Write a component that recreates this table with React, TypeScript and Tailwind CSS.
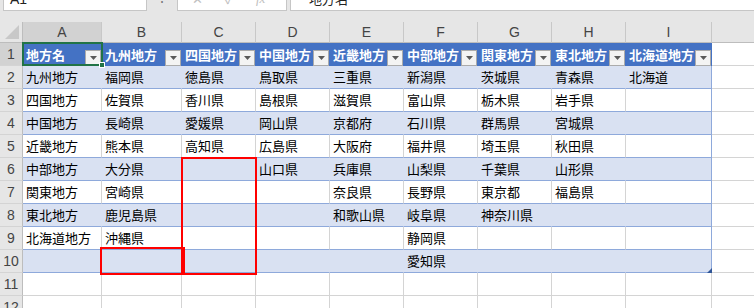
import React from 'react';

const COLS = ['A', 'B', 'C', 'D', 'E', 'F', 'G', 'H', 'I'];

const HEADERS = ['地方名', '九州地方', '四国地方', '中国地方', '近畿地方', '中部地方', '関東地方', '東北地方', '北海道地方'];

const ROWS: string[][] = [
  ['九州地方', '福岡県', '徳島県', '鳥取県', '三重県', '新潟県', '茨城県', '青森県', '北海道'],
  ['四国地方', '佐賀県', '香川県', '島根県', '滋賀県', '富山県', '栃木県', '岩手県', ''],
  ['中国地方', '長崎県', '愛媛県', '岡山県', '京都府', '石川県', '群馬県', '宮城県', ''],
  ['近畿地方', '熊本県', '高知県', '広島県', '大阪府', '福井県', '埼玉県', '秋田県', ''],
  ['中部地方', '大分県', '', '山口県', '兵庫県', '山梨県', '千葉県', '山形県', ''],
  ['関東地方', '宮崎県', '', '', '奈良県', '長野県', '東京都', '福島県', ''],
  ['東北地方', '鹿児島県', '', '', '和歌山県', '岐阜県', '神奈川県', '', ''],
  ['北海道地方', '沖縄県', '', '', '', '静岡県', '', '', ''],
  ['', '', '', '', '', '愛知県', '', '', ''],
];

const font = "font-['Noto_Sans_CJK_JP','Liberation_Sans',sans-serif]";

// テーブル見出しのフィルターボタン
function FilterButton() {
  return (
    <div className="self-end mr-[1px] w-[16px] h-[16px] shrink-0 bg-[#f3f3f3] border border-[#ababab] flex items-center justify-center">
      <svg width="7" height="4" viewBox="0 0 7 4">
        <path d="M0 0 L7 0 L3.5 4 Z" fill="#595959" />
      </svg>
    </div>
  );
}

function RowHeader({ n, active }: { n: number; active?: boolean }) {
  return (
    <div
      className={`h-[23px] border-r border-b border-r-[#bdbdbd] border-b-[#d4d4d4] flex items-center justify-center text-[14px] text-[#444] font-['Liberation_Sans',sans-serif] ${
        active ? 'bg-[#d2d2d2]' : 'bg-[#e6e6e6]'
      }`}
    >
      {n}
    </div>
  );
}

export default function App() {
  return (
    <div className={`relative w-[754px] h-[308px] overflow-hidden bg-white ${font}`}>
      {/* 数式バー（上端で切れている） */}
      <div className="h-[22px] bg-[#e6e6e6] flex items-start overflow-hidden">
        <div className="ml-[3px] -mt-[13px] w-[144px] h-[24px] bg-white border border-[#c6c6c6] pl-[6px] flex items-center text-[14px] text-[#222] font-['Liberation_Sans',sans-serif]">
          A1
        </div>
        <div className="w-[30px] -mt-[11px] text-center text-[14px] text-[#777] leading-none">⋮</div>
        <div className="-mt-[13px] w-[110px] h-[24px] bg-white border border-[#c6c6c6] flex items-center gap-[22px] pl-[14px] text-[13px] text-[#c0c0c0]">
          <span>✕</span>
          <span>✓</span>
          <span className="italic font-['Liberation_Serif',serif]">fx</span>
        </div>
        <div className="ml-[3px] -mt-[13px] flex-1 h-[24px] bg-white border border-[#c6c6c6] border-r-0 pl-[18px] flex items-center text-[13px] text-[#222]">
          地方名
        </div>
      </div>

      {/* シート */}
      <div className="grid grid-cols-[23px_79px_80px_74px_74px_74px_74px_74px_74px_86px_1fr]">
        {/* 列見出し */}
        <div className="h-[21px] bg-[#e6e6e6] border-r border-b border-[#bdbdbd] relative">
          <svg className="absolute right-[3px] bottom-[3px]" width="14" height="14" viewBox="0 0 14 14">
            <path d="M14 0 L14 14 L0 14 Z" fill="#c8c8c8" />
          </svg>
        </div>
        {COLS.map((c, i) => (
          <div
            key={c}
            className={`h-[21px] border-r border-b border-r-[#c8c8c8] border-b-[#bdbdbd] flex items-center justify-center text-[14px] text-[#444] font-['Liberation_Sans',sans-serif] ${
              i === 0 ? 'bg-[#d2d2d2]' : 'bg-[#e6e6e6]'
            }`}
          >
            {c}
          </div>
        ))}
        <div className="h-[21px] bg-[#e6e6e6] border-b border-[#bdbdbd]" />

        {/* 1行目：テーブル見出し */}
        <RowHeader n={1} active />
        {HEADERS.map((h) => (
          <div key={h} className="h-[23px] bg-[#4472c4] flex items-center pl-[3px] text-[13px] font-bold text-white">
            <span className="flex-1 whitespace-nowrap overflow-hidden">{h}</span>
            <FilterButton />
          </div>
        ))}
        <div className="h-[23px] border-b border-[#d4d4d4] bg-white" />

        {/* 2〜10行目 */}
        {ROWS.map((row, ri) => {
          const banded = ri % 2 === 0;
          return (
            <React.Fragment key={ri}>
              <RowHeader n={ri + 2} />
              {row.map((v, ci) => (
                <div
                  key={ci}
                  className={`h-[23px] border-r border-b border-b-[#8ea9db] flex items-center pl-[3px] text-[13px] text-black whitespace-nowrap ${
                    banded ? 'bg-[#d9e1f2]' : 'bg-white'
                  } ${ci === 8 ? 'border-r-[#8ea9db]' : banded ? 'border-r-[#d9e1f2]' : 'border-r-[#d4d4d4]'}`}
                >
                  {v}
                </div>
              ))}
              <div className="h-[23px] border-b border-[#d4d4d4] bg-white" />
            </React.Fragment>
          );
        })}

        {/* 11行目以降 */}
        {[11, 12].map((n) => (
          <React.Fragment key={n}>
            <RowHeader n={n} />
            {COLS.map((c) => (
              <div key={c} className="h-[23px] border-r border-b border-[#d4d4d4] bg-white" />
            ))}
            <div className="h-[23px] border-b border-[#d4d4d4] bg-white" />
          </React.Fragment>
        ))}
      </div>

      {/* A1 選択枠 */}
      <div className="absolute left-[22px] top-[42px] w-[81px] h-[24px] border-2 border-[#217346] pointer-events-none" />
      <div className="absolute left-[99px] top-[62px] w-[6px] h-[6px] bg-[#217346] border border-white" />

      {/* テーブルのサイズ変更ハンドル */}
      <svg className="absolute left-[707px] top-[268px]" width="5" height="5" viewBox="0 0 5 5">
        <path d="M5 0 L5 5 L0 5 Z" fill="#2f5597" />
      </svg>

      {/* 赤枠 */}
      <div className="absolute left-[181px] top-[157px] w-[76px] h-[118px] border-2 border-[#ff0000]" />
      <div className="absolute left-[100px] top-[247px] w-[85px] h-[28px] border-2 border-[#ff0000]" />
    </div>
  );
}
